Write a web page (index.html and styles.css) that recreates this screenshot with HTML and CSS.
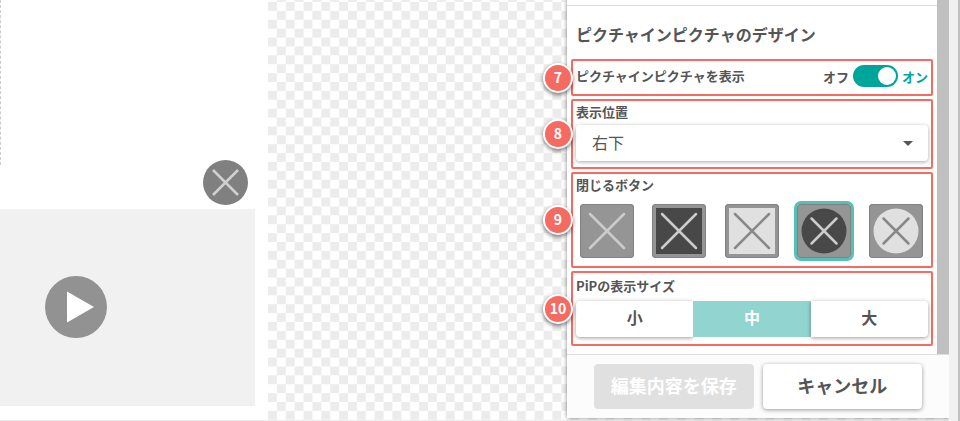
FILE: index.html
```
<!DOCTYPE html>
<html lang="ja">
<head>
  <meta charset="UTF-8" />
  <title>ピクチャインピクチャのデザイン</title>
  <link rel="stylesheet" href="styles.css">
</head>
<body>

  <!-- Preview -->
  <main class="preview">
    <div class="preview-frame"></div>
    <button type="button" class="preview-close" aria-label="閉じる">
      <svg viewBox="0 0 45 45"><path d="M10 10L35 35M35 10L10 35" /></svg>
    </button>
    <div class="video">
      <button type="button" class="play" aria-label="再生">
        <svg viewBox="0 0 62 62"><path d="M22 15.500V46.500L49 31z" /></svg>
      </button>
    </div>
  </main>

  <!-- Checkered canvas with the settings panel on its right -->
  <div class="stage">
    <form class="panel">
      <div class="panel-scroll">
        <div class="panel-body">
          <h2>ピクチャインピクチャのデザイン</h2>

          <div class="field field-toggle">
            <span class="badge">7</span>
            <label class="field-label" for="pip">ピクチャインピクチャを表示</label>
            <div class="toggle">
              <span>オフ</span>
              <input type="checkbox" id="pip" class="switch" checked>
              <span class="on">オン</span>
            </div>
          </div>

          <div class="field field-position">
            <span class="badge">8</span>
            <label class="field-label" for="position">表示位置</label>
            <div class="select">
              <select id="position">
                <option>右下</option>
                <option>左下</option>
                <option>右上</option>
                <option>左上</option>
              </select>
            </div>
          </div>

          <fieldset class="field field-close">
            <span class="badge">9</span>
            <span class="field-label">閉じるボタン</span>
            <div class="close-list">
              <label class="close-item plain">
                <input type="radio" name="close" aria-label="枠なし">
                <svg viewBox="0 0 54 54"><path d="M10 10L44 44M44 10L10 44" /></svg>
              </label>
              <label class="close-item dark">
                <input type="radio" name="close" aria-label="四角 黒">
                <svg viewBox="0 0 54 54"><rect x="4" y="4" width="46" height="46" /><path d="M10 10L44 44M44 10L10 44" /></svg>
              </label>
              <label class="close-item light">
                <input type="radio" name="close" aria-label="四角 白">
                <svg viewBox="0 0 54 54"><rect x="4" y="4" width="46" height="46" /><path d="M10 10L44 44M44 10L10 44" /></svg>
              </label>
              <label class="close-item dark">
                <input type="radio" name="close" aria-label="丸 黒" checked>
                <svg viewBox="0 0 54 54"><circle cx="27" cy="27" r="22.500" /><path d="M14.500 14.500L39.500 39.500M39.500 14.500L14.500 39.500" /></svg>
              </label>
              <label class="close-item light">
                <input type="radio" name="close" aria-label="丸 白">
                <svg viewBox="0 0 54 54"><circle cx="27" cy="27" r="22.500" /><path d="M14.500 14.500L39.500 39.500M39.500 14.500L14.500 39.500" /></svg>
              </label>
            </div>
          </fieldset>

          <fieldset class="field field-size">
            <span class="badge">10</span>
            <span class="field-label">PiPの表示サイズ</span>
            <div class="segments">
              <label class="segment"><input type="radio" name="size"><span>小</span></label>
              <label class="segment"><input type="radio" name="size" checked><span>中</span></label>
              <label class="segment"><input type="radio" name="size"><span>大</span></label>
            </div>
          </fieldset>
        </div>
        <div class="scrollbar"></div>
      </div>

      <div class="panel-footer">
        <button type="button" class="btn btn-save" disabled>編集内容を保存</button>
        <button type="button" class="btn btn-cancel">キャンセル</button>
      </div>
    </form>
  </div>

  <div class="page-scroll"></div>

</body>
</html>
```

FILE: styles.css
```
/* Basic Reset */
* {
  margin: 0;
  padding: 0;
  box-sizing: border-box;
}

body {
  display: grid;
  grid-template-columns: 268fr 681fr 11px;
  min-height: 100vh;
  font-family: "Noto Sans CJK JP", sans-serif;
  font-size: 13px;
  font-weight: bold;
  color: #555;
  background: #fff;
}

button,
select {
  font-family: inherit;
  border: 0;
}

svg {
  display: block;
  width: 100%;
}

/* Preview */
.preview {
  display: flex;
  flex-direction: column;
  padding: 0 13px 14px 0;
  border-bottom: 1px solid #eee;
}

.preview-frame {
  flex: 1;
  border-left: 1px dashed #ccc;
}

.preview-close {
  align-self: flex-end;
  width: 45px;
  height: 45px;
  margin: -5px 7px 4px 0;
  border-radius: 50%;
  background: #808080;
}

.preview-close path {
  stroke: #d0d0d0;
  stroke-width: 2.5;
}

.video {
  padding: 67px 0 68px 45px;
  background: #f1f1f1;
}

.play {
  display: block;
  width: 62px;
  height: 62px;
  border-radius: 50%;
  background: #929292;
}

.play path {
  fill: #fff;
}

/* Checkered canvas */
.stage {
  display: grid;
  grid-template-columns: 299fr 382fr;
  padding-bottom: 2px;
  border-bottom: 1px solid #eee;
  background: url('data:image/svg+xml,<svg xmlns="http://www.w3.org/2000/svg" viewBox="0 0 162 162"><defs><pattern id="c" width="18" height="18" patternUnits="userSpaceOnUse"><path d="M0 0h9v9H0zM9 9h9v9H9z" fill="%23ececec"/></pattern></defs><rect width="162" height="162" fill="url(%23c)"/></svg>') 0 2px / 160px 160px;
}

/* Settings panel */
.panel {
  grid-column: 2;
  display: flex;
  flex-direction: column;
  background: #fff;
  box-shadow: 0 0 4px rgba(0, 0, 0, 0.5);
  clip-path: inset(0 0 -4px -40px);
}

.panel-scroll {
  flex: 1;
  display: flex;
}

.panel-body {
  flex: 1;
  display: flex;
  flex-direction: column;
  gap: 3px;
  padding: 5px 4px 8px;
  background: linear-gradient(#ddd, #ddd) 0 5px / 100% 1px no-repeat;
}

.scrollbar {
  width: 12px;
  background: #c0c0c0;
}

.panel h2 {
  padding: 17px 5px 10px;
  font-size: 16px;
  line-height: 24px;
}

/* Numbered fields */
.field {
  position: relative;
  min-width: 0;
  padding: 0 3px;
  border: 2px solid #f56b62;
  border-radius: 2px;
}

.field-label {
  display: block;
  line-height: 22px;
}

.badge {
  position: absolute;
  top: 50%;
  left: -30px;
  width: 30px;
  height: 30px;
  margin-top: -15px;
  border: 2px solid #fff;
  border-radius: 50%;
  background: #f56b62;
  color: #fff;
  font-size: 14px;
  line-height: 24px;
  text-align: center;
  box-shadow: 0 2px 4px rgba(0, 0, 0, 0.5);
}

/* On / off switch */
.field-toggle {
  display: flex;
  align-items: center;
  justify-content: space-between;
  min-height: 37px;
  padding-bottom: 3px;
}

.toggle {
  display: flex;
  align-items: center;
  gap: 4px;
}

.toggle .on {
  color: #00a59a;
}

.switch {
  appearance: none;
  width: 45px;
  height: 22px;
  padding: 2px;
  border-radius: 11px;
  background: #bbb;
}

.switch::before {
  content: "";
  display: block;
  width: 18px;
  height: 18px;
  border-radius: 50%;
  background: #fff;
}

.switch:checked {
  background: #00a59a;
}

.switch:checked::before {
  margin-left: auto;
}

/* Position */
.field-position {
  padding-bottom: 6px;
}

.select {
  display: flex;
  align-items: center;
  margin-top: 2px;
  border-radius: 4px;
  box-shadow: 0 1px 4px rgba(0, 0, 0, 0.35);
}

.select select {
  appearance: none;
  flex: 1;
  height: 36px;
  padding: 0 16px 3px;
  border-radius: 4px;
  background: #fff;
  color: #555;
  font-size: 16px;
}

.select::after {
  content: "";
  margin: 0 15px 0 -24px;
  border: 5px solid transparent;
  border-top-color: #555;
  border-bottom: 0;
  pointer-events: none;
}

/* Close button styles */
.close-list {
  display: flex;
  justify-content: space-between;
  padding: 8px 5px 8px 4px;
}

.close-item input,
.segment input {
  position: absolute;
  opacity: 0;
}

.close-item {
  width: 54px;
  border-radius: 4px;
  background: #959595;
  box-shadow: inset 0 0 0 1px #808080;
}

.close-item:has(:checked) {
  outline: 3px solid #58bfb7;
}

.close-item path {
  stroke: #ccc;
  stroke-width: 2.5;
  stroke-linecap: round;
}

.dark rect,
.dark circle {
  fill: #484848;
}

.light rect,
.light circle {
  fill: #e0e0e0;
}

.close-item.light path {
  stroke: #888;
}

/* Size */
.field-size {
  padding-top: 2px;
  padding-bottom: 7px;
}

.segments {
  display: grid;
  grid-template-columns: repeat(3, 1fr);
  margin-top: 4px;
}

.segment {
  padding-bottom: 4px;
  background: #fff;
  font-size: 16px;
  line-height: 32px;
  text-align: center;
  box-shadow: 0 1px 4px rgba(0, 0, 0, 0.4);
}

.segment:first-child {
  border-radius: 4px 0 0 4px;
}

.segment:last-child {
  border-radius: 0 4px 4px 0;
}

.segment:has(:checked) {
  background: #92d4cf;
  color: #fff;
  box-shadow: none;
}

/* Footer */
.panel-footer {
  display: grid;
  grid-template-columns: 1fr 1fr;
  gap: 9px;
  padding: 9px 27px;
  border-top: 1px solid #ddd;
  background: #fcfcfc;
}

.btn {
  height: 45px;
  padding-bottom: 3px;
  border-radius: 4px;
  font-size: 18px;
  font-weight: bold;
}

.btn-save {
  background: #e0e0e0;
  color: #fff;
}

.btn-cancel {
  background: #fff;
  color: #555;
  box-shadow: 0 1px 4px rgba(0, 0, 0, 0.4);
}

/* Page edge */
.page-scroll {
  border-right: 2px solid #c0c0c0;
  background: #f1f1f1;
}
```
